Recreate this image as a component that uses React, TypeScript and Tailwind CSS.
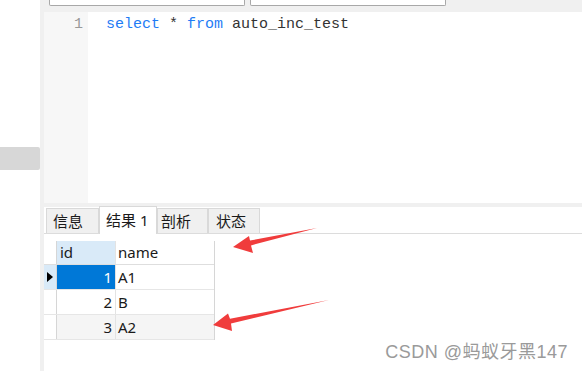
import React from "react";

const ui = { fontFamily: '"Noto Sans", "Noto Sans CJK SC", sans-serif' };
const mono = { fontFamily: '"Liberation Mono", "DejaVu Sans Mono", monospace' };

const rows = [
  { id: 1, name: "A1" },
  { id: 2, name: "B" },
  { id: 3, name: "A2" },
];

const tabs = [
  { label: "信息", w: "w-[53px]", pl: "pl-[6px]" },
  { label: "结果 1", w: "w-[58px]", pl: "pl-[6px]", active: true },
  { label: "剖析", w: "w-[51px]", pl: "pl-[3px]" },
  { label: "状态", w: "w-[52px]", pl: "pl-[7px]" },
];

export default function App() {
  return (
    <div className="relative flex w-[582px] h-[371px] overflow-hidden bg-white text-[#1a1a1a]" style={ui}>
      {/* left side panel */}
      <div className="w-[40px] shrink-0 bg-white">
        <div className="mt-[147px] h-[23px] bg-[#d7d7d7] rounded-r-[2px]" />
      </div>
      <div className="w-[4px] shrink-0 bg-[#f0f0f0]" />

      <div className="flex-1 flex flex-col min-w-0">
        {/* top toolbar strip */}
        <div className="h-[12px] bg-[#f0f0f0] flex items-start gap-[5px] pl-[5px]">
          <div className="w-[196px] h-[6px] bg-white border border-t-0 border-[#a8a8a8] rounded-b-[2px]" />
          <div className="w-[196px] h-[6px] bg-white border border-t-0 border-[#a8a8a8] rounded-b-[2px]" />
        </div>

        {/* editor */}
        <div className="h-[191px] flex">
          <div className="w-[44px] bg-[#f7f7f7] text-right pr-[5px] pt-[3px] text-[15px] leading-[20px] text-[#999]" style={mono}>
            1
          </div>
          <div className="flex-1 pl-[18px] pt-[3px] text-[15px] leading-[20px] whitespace-pre text-[#333]" style={mono}>
            <span className="text-[#1f7cf5]">select</span> * <span className="text-[#1f7cf5]">from</span> auto_inc_test
          </div>
        </div>
        <div className="h-[4px] bg-[#f0f0f0]" />

        {/* tabs */}
        <div className="h-[27px] flex items-end pl-[2px] border-b border-[#dcdcdc]">
          {tabs.map((t) =>
            t.active ? (
              <div
                key={t.label}
                className={`${t.w} ${t.pl} h-[28px] -mb-px bg-white border border-b-0 border-[#d9d9d9] text-[15px] leading-[26px]`}
              >
                {t.label}
              </div>
            ) : (
              <div
                key={t.label}
                className={`${t.w} ${t.pl} h-[25px] bg-[#f0f0f0] border border-b-0 border-[#d9d9d9] text-[15px] leading-[24px]`}
              >
                {t.label}
              </div>
            )
          )}
        </div>

        {/* result grid */}
        <div className="pt-[7px]">
          <div className="w-[171px] border-r border-[#d6d6d6] text-[15px]">
            <div className="flex h-[24px] border-b border-[#dedede]">
              <div className="w-[13px] border-r border-[#d6d6d6] bg-white" />
              <div className="w-[59px] bg-[#d9eaf8] pl-[3px] leading-[23px] border-r border-[#e3e3e3]">id</div>
              <div className="flex-1 pl-[2px] leading-[23px]">name</div>
            </div>
            {rows.map((r, i) => (
              <div key={r.id} className={`flex h-[25px] border-b border-[#e6e6e6] ${i === 2 ? "bg-[#f5f5f5]" : "bg-white"}`}>
                <div className={`w-[13px] border-r border-[#d6d6d6] flex items-center justify-center ${i === 0 ? "bg-[#d9eaf8]" : "bg-white"}`}>
                  {i === 0 && (
                    <svg width="6" height="10" viewBox="0 0 6 10">
                      <path d="M0 0 L6 5 L0 10 Z" fill="#000" />
                    </svg>
                  )}
                </div>
                <div
                  className={`w-[59px] text-right pr-[3px] leading-[24px] border-r border-[#e3e3e3] ${
                    i === 0 ? "bg-[#0078d7] text-white" : ""
                  }`}
                >
                  {r.id}
                </div>
                <div className="flex-1 pl-[2px] leading-[24px]">{r.name}</div>
              </div>
            ))}
          </div>
        </div>
      </div>

      {/* annotation arrows */}
      <svg className="absolute inset-0 pointer-events-none" width="582" height="371" viewBox="0 0 582 371">
        <polygon points="233,247 249,236 250,240.6 317,228 251,245.4 253,253" fill="#f03c3c" />
        <polygon points="213,325 228,313.5 230,318.8 329,300 231,323.6 232,331" fill="#f03c3c" />
      </svg>

      {/* watermark */}
      <div
        className="absolute right-[14px] bottom-[8px] text-[18px] leading-[22px] text-[#9a9a9a] tracking-[0.5px]"
        style={{ fontFamily: '"Liberation Sans", "Noto Sans CJK SC", sans-serif', textShadow: "0 0 1px #fff" }}
      >
        CSDN @蚂蚁牙黑147
      </div>
    </div>
  );
}
